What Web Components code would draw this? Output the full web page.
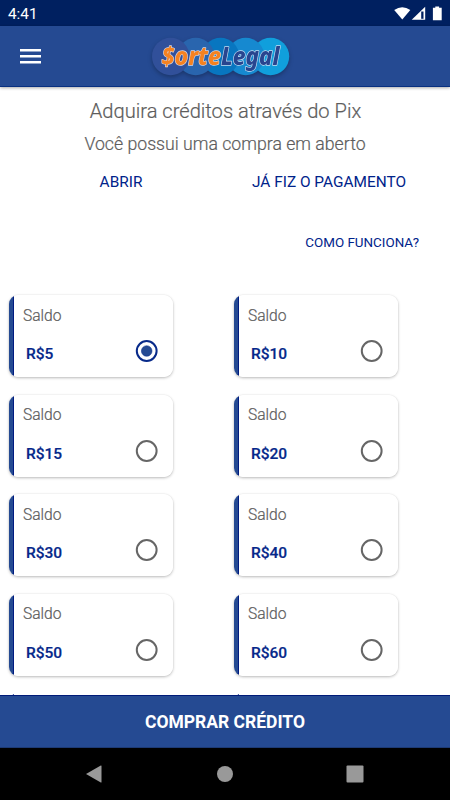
<!DOCTYPE html>
<html lang="pt-BR"><head><meta charset="utf-8"><title>Sorte Legal</title>
<style>
html,body{margin:0;height:100%;overflow:hidden}
body{font-family:Roboto,sans-serif;background:#fff}
</style></head><body>
<credit-page></credit-page>
<script>
const define=(name,html,init)=>customElements.define(name,class extends HTMLElement{
  connectedCallback(){
    if(this.shadowRoot)return;
    const t=document.createElement('template');
    t.innerHTML=html;
    this.attachShadow({mode:'open'}).append(t.content.cloneNode(true));
    if(init)init(this,this.shadowRoot);
  }
});

define('status-bar',`<style>
:host{display:flex;align-items:center;height:26px;background:#002060;color:#fff;padding:2px 7px 0 8px;box-sizing:border-box;justify-content:space-between}
span{font-size:15.3px;line-height:24px}
svg{display:block}
</style><span><slot></slot></span>
<svg width="50" height="20" viewBox="393 3.500 50 20" fill="#fff">
<path d="M394.200 9.500Q402.300 4 410.300 9.500L402.300 19Z"/>
<path d="M425.200 6.200V19.300H411.700Z"/><path d="M421.200 11H423.500V18.300H421.200Z" fill="#002060"/>
<path d="M435.300 6h3.800v1.300h2.600V19.700h-8.800V7.300h2.400Z"/></svg>`);

define('brand-logo',`<style>:host{display:block;filter:drop-shadow(0 2px 2px #0004)}svg{display:block}
text{font:italic 800 24px "Noto Sans",sans-serif;stroke-width:1.3px;paint-order:stroke;stroke-linejoin:round}</style>
<svg width="140" height="40" viewBox="151 36 140 40">
<circle cx="270.5" cy="56.5" r="18.7" fill="#109fdc"/>
<circle cx="245.7" cy="56.5" r="18.7" fill="#1689d0"/>
<circle cx="220.5" cy="56.5" r="18.7" fill="#0876c0"/>
<circle cx="195.7" cy="56.5" r="18.7" fill="#2965ae"/>
<circle cx="170.7" cy="56.5" r="18.7" fill="#31509a"/>
<text x="161.5" y="64.7" fill="#f58220" stroke="#d8d5df" textLength="59.5" lengthAdjust="spacingAndGlyphs">$orte</text>
<text x="221" y="64.7" fill="#28458f" stroke="#c5dcf0" textLength="58.5" lengthAdjust="spacingAndGlyphs">Legal</text></svg>`);

define('app-bar',`<style>
:host{display:grid;grid-template-columns:151px 140px 1fr;align-items:center;height:61px;box-sizing:border-box;background:#254a92;border-bottom:1px solid #083080;box-shadow:0 1px 3px #0005;position:relative}
.menu{display:block;margin-left:20px}
</style><svg class="menu" width="22" height="16" viewBox="0 0 22 16" fill="#fff"><path d="M0 1h21v2.400H0zM0 7h21v2.400H0zM0 13h21v2.400H0z"/></svg>
<brand-logo></brand-logo><span></span>`);

define('text-button',`<style>:host{display:block;color:#00238a;font-size:15.4px;line-height:20px;white-space:nowrap}</style><slot></slot>`);

define('page-intro',`<style>
:host{display:block;height:208px;box-sizing:border-box;padding-top:10px;color:#5d5d5d;text-align:center}
h1,p{margin:0;font-weight:300;-webkit-text-stroke:.2px #5d5d5d}
h1{font-size:20.1px;line-height:28px;padding-left:1px}
p{font-size:17.7px;line-height:24px;padding-top:7px}
.actions{display:grid;grid-template-columns:1fr 1fr;margin-top:16px;justify-items:center}
.actions text-button:first-child{padding-left:17px}
.actions text-button:last-child{padding-right:17px}
.help{font-size:13.4px;margin:41px 31px 0 0;text-align:right}
</style><h1>Adquira créditos através do Pix</h1><p>Você possui uma compra em aberto</p>
<div class="actions"><text-button>ABRIR</text-button><text-button>JÁ FIZ O PAGAMENTO</text-button></div>
<text-button class="help">COMO FUNCIONA?</text-button>`);

define('radio-mark',`<style>:host{display:block;width:23px;height:22px}svg{display:block}
circle{fill:none;stroke:#666;stroke-width:2}.dot{display:none}
:host([checked]) circle{stroke:#082a8a}:host([checked]) .dot{display:block;fill:#254a92;stroke-width:.5}</style>
<svg width="23" height="22"><circle cx="11.700" cy="11" r="9.9"/><circle class="dot" cx="11.700" cy="11" r="5.3"/></svg>`);

const cardSurface='border-radius:9px;background:linear-gradient(90deg,#254a92 4px,#001b80 4px 5px,#fff 5px);box-shadow:0 1px 3px #0004,0 0 1px #0002;box-sizing:border-box;width:164px;height:82px';

define('credit-card',`<style>
:host{display:flex;flex-direction:column;justify-content:space-between;padding:10.700px 15px 13px 14px;${cardSurface}}
.label{font-weight:300;font-size:15.6px;line-height:20px;color:#5d5d5d;-webkit-text-stroke:.2px #5d5d5d}
.row{display:flex;justify-content:space-between;align-items:flex-end;padding-left:3px}
.value{font-weight:500;font-size:15.5px;line-height:20px;color:#06288a;-webkit-text-stroke:.2px #06288a}
radio-mark{margin-bottom:2px}
</style><div class="label">Saldo</div><div class="row"><span class="value"><slot></slot></span><radio-mark></radio-mark></div>`,
(host,root)=>{if(host.hasAttribute('checked'))root.querySelector('radio-mark').setAttribute('checked','')});

define('card-edge',`<style>:host{display:block;${cardSurface};box-shadow:none}</style>`);

define('card-grid',`<style>:host{display:grid;grid-template-columns:225px 225px;grid-auto-rows:82px;row-gap:17.6px;padding-left:9px}</style><slot></slot>`);

define('buy-bar',`<style>:host{display:flex;align-items:center;justify-content:center;height:53px;box-sizing:border-box;background:#254a92;border-top:1px solid #001b78;border-bottom:1px solid #1d3a74;color:#fff;font-weight:700;font-size:17.5px}</style><slot></slot>`);

define('nav-bar',`<style>:host{display:grid;grid-template-columns:188px 74px 185px;align-items:center;justify-items:center;height:52px;background:#000}svg{display:block}</style>
<svg width="18" height="18" fill="#999"><path d="M1 9 15.8.5Q16.500 .2 16.500 1V17Q16.500 17.800 15.800 17.500Z"/></svg>
<svg width="18" height="18" fill="#999"><circle cx="9" cy="9" r="8"/></svg>
<svg width="18" height="18" fill="#999"><rect x=".5" y=".5" width="17" height="17" rx="1"/></svg>`);

define('credit-page',`<style>
:host{display:grid;grid-template-rows:26px 61px minmax(0,1fr) 53px 52px;height:800px;width:450px}
main{overflow:hidden;background:#fff}
</style><status-bar>4:41</status-bar><app-bar></app-bar>
<main><page-intro></page-intro><card-grid>
<credit-card checked>R$5</credit-card><credit-card>R$10</credit-card>
<credit-card>R$15</credit-card><credit-card>R$20</credit-card>
<credit-card>R$30</credit-card><credit-card>R$40</credit-card>
<credit-card>R$50</credit-card><credit-card>R$60</credit-card>
<card-edge></card-edge><card-edge></card-edge>
</card-grid></main><buy-bar>COMPRAR CRÉDITO</buy-bar><nav-bar></nav-bar>`);
</script></body></html>
